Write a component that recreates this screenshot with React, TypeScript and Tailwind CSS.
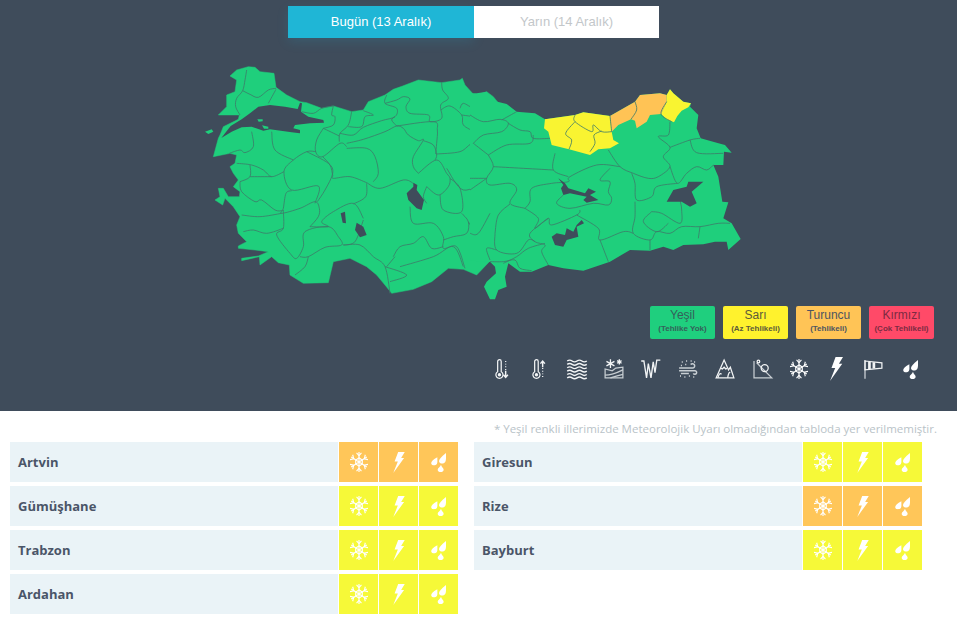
import React from 'react';

// coords below are in 3x crop space, the two groups are placed with a transform
const WEST_LAND =
  'M90,228 110,210 145,200 165,202 180,215 222,220 228,262 260,285 300,305 320,308 365,325 400,318 455,335 490,330 505,305 555,285 580,268 608,258 655,240 725,248 780,240 787,235 795,255 825,288 860,275 880,290 900,315 900,780 868,785 830,825 790,808 745,805 695,845 640,868 575,880 555,855 530,825 500,800 450,775 400,785 385,848 310,850 270,825 268,795 235,788 215,770 180,795 178,770 125,782 125,775 175,768 205,755 165,750 115,745 115,738 140,725 115,700 110,675 120,650 100,620 75,595 68,615 45,600 60,590 55,565 70,565 85,590 118,590 120,575 100,560 115,540 100,520 90,500 105,490 110,465 90,460 40,470 55,415 60,405 70,380 115,358 118,345 55,345 80,320 80,285 105,275 110,240 Z';
const MARMARA =
  'M64,414 92,378 125,358 150,340 175,320 210,315 255,320 293,327 300,308 306,310 303,335 325,350 370,360 372,368 330,370 285,375 280,385 300,390 300,400 275,397 210,388 190,392 155,380 125,382 95,395 Z';
const WEST_ISLANDS = [
  'M15,395 35,388 40,395 25,402 Z',
  'M172,358 188,358 188,364 176,365 Z',
  'M186,376 205,380 205,386 192,386 Z',
];
const WEST_LAKES = [
  'M640,548 652,555 650,570 672,600 665,630 650,625 625,600 620,580 640,560 Z',
  'M470,668 490,680 500,705 480,712 465,690 Z',
  'M422,640 435,635 438,670 428,668 Z',
];
const WEST_BORDERS = [
  'M140,210 135,240 128,272 110,295 107,320 120,345',
  'M128,272 150,283 175,292 205,270 228,265',
  'M228,268 205,310',
  'M305,335 340,340 365,325 400,318',
  'M400,318 395,345 405,350 400,375 370,385',
  'M455,335 445,375 420,400 418,425',
  'M370,385 350,420 347,455 368,470 420,430 440,440',
  'M370,385 418,408',
  'M445,380 485,380 495,350 520,345 490,332',
  'M420,400 460,405 490,382 545,362 585,350 590,325 555,310 560,285',
  'M555,310 590,300 610,290 630,297 618,320 630,340 685,345 690,365 725,355 722,315 745,295 728,270 725,248',
  'M590,378 575,360 585,350',
  'M440,445 500,445 525,470 535,520 520,545',
  'M440,430 490,418 555,395 590,378 610,385 625,405 655,422 670,420 640,470 640,500 655,520',
  'M590,378 700,365 712,390 710,430 707,462',
  'M670,422 700,435 710,465 705,480',
  'M368,470 390,495 398,525 400,535 450,530 500,548',
  'M348,455 320,455 280,480 252,515 275,570 355,558 345,610',
  'M320,455 385,490 398,520 375,570 352,605',
  'M252,515 215,530 190,510 155,495 110,490',
  'M120,545 150,530 150,495',
  'M150,530 215,530',
  'M280,480 225,450 215,395',
  'M88,460 120,450 135,458 160,440 155,395',
  'M120,545 125,575 165,605 185,600 225,630 247,632',
  'M275,572 258,580 250,625 245,640 300,625 345,605 358,625 355,650 330,680',
  'M250,630 250,685 230,705 270,760 290,775 310,740 315,695 385,680 415,710 425,735 375,742 325,770 300,770',
  'M245,640 180,650 125,645',
  'M250,685 200,700 160,690 130,695',
  'M330,680 385,680 365,665 400,635 460,610 490,655',
  'M500,550 497,590 460,612',
  'M490,660 465,725 430,735 480,735 520,770 555,800 570,880',
  'M325,770 315,800 285,825',
  'M555,800 620,825 570,845',
  'M600,800 700,770 760,740 790,800',
  'M580,770 600,740 640,730 670,710 695,745 730,740',
  'M560,800 585,770',
  'M630,620 640,670 700,670 730,710 730,745 770,740 795,805',
  'M500,548 540,565 610,540 640,550',
  'M680,560 670,590 680,610',
  'M655,520 710,480 740,520 750,535 745,560 715,585 680,560',
  'M750,535 780,565 785,635 730,630 720,585',
  'M785,640 805,665 800,700 760,710 730,720',
  'M740,505 790,570 860,535 880,490 870,462 900,462',
  'M710,462 780,455 820,430 870,450',
  'M820,430 825,400 790,375 785,345 750,318 722,330',
  'M780,325 790,310 820,322 825,290',
  'M785,345 850,355 895,370',
  'M820,430 850,410 900,400',
  'M860,535 865,555 900,555',
  'M805,665 830,700 860,680 885,635 900,635',
  'M860,700 870,770 885,785',
  'M890,710 890,740 900,745',
];

const EAST_LAND =
  'M0,100 20,100 50,95 70,122 110,132 140,155 195,160 225,178 315,165 340,157 420,168 495,125 510,105 570,100 590,105 600,88 610,100 640,125 663,130 660,140 685,165 680,205 692,235 740,248 765,255 785,278 762,275 760,315 730,315 745,350 757,425 775,427 760,475 785,490 812,537 775,570 770,545 735,545 700,553 640,555 610,570 580,560 540,572 480,570 420,605 340,632 280,625 235,615 185,635 150,635 115,610 105,650 110,680 85,690 75,718 60,718 42,680 50,665 78,640 75,620 60,605 30,605 0,600 Z';
const EAST_YELLOW = [
  'M225,178 315,165 340,157 420,168 425,215 430,240 447,250 420,265 385,268 360,285 297,268 245,255 235,215 222,205 Z',
  'M590,105 600,88 610,100 640,125 663,130 655,142 635,152 622,168 612,187 590,178 573,162 590,125 Z',
];
const EAST_ORANGE = 'M420,168 495,125 510,105 570,100 590,105 590,125 573,162 540,165 530,185 500,205 495,182 483,178 445,195 425,215 Z';
const EAST_LAKES = [
  'M265,355 285,370 295,385 345,400 355,385 378,395 360,405 385,420 350,428 340,420 350,410 300,400 280,405 273,385 280,375 Z',
  'M335,480 342,490 320,500 325,530 290,540 280,560 255,555 245,530 260,520 285,525 290,505 310,515 320,495 Z',
  'M590,425 610,390 650,380 655,365 700,365 665,395 680,430 660,440 635,425 Z',
];
const EAST_BORDERS = [
  'M315,165 315,185 365,215 370,195 395,215 425,215',
  'M315,185 287,220 305,240 297,268',
  'M395,213 372,225 375,250 360,275',
  'M420,168 425,215',
  'M495,125 500,150 483,178',
  'M590,125 573,162 605,185',
  'M600,185 595,225 565,230 600,262 580,290 600,320 565,350 535,355 490,340 450,320 415,270',
  'M600,262 660,240 690,235',
  'M660,240 680,278 760,280',
  'M600,320 622,370 650,340 680,320 710,330 730,315',
  'M622,370 560,380 545,410 500,420 495,370 485,340',
  'M450,320 380,315 300,350 295,365 245,370 185,385 180,425 165,445',
  'M420,325 390,360 420,365 415,395 425,415 415,435 370,430 300,445 260,430 280,405',
  'M255,280 250,330 295,350',
  'M250,330 70,320',
  'M55,285 70,320 50,355 60,375 120,370 140,390 120,430 165,445',
  'M240,235 190,235 180,215 150,210 115,190',
  'M55,285 110,255 180,250 190,225',
  'M10,250 55,285',
  'M0,165 40,185 90,178 115,190 95,215 40,225 10,250',
  'M95,180 140,155',
  'M0,355 50,355',
  'M50,355 0,390',
  'M120,432 85,465 75,520',
  'M165,445 205,475 195,505 235,475 245,495 320,465 330,450',
  'M320,465 385,505 390,540 460,515 490,520',
  'M495,425 495,470 490,520 540,540 560,515 600,520 635,500 690,500 745,490 780,490',
  'M545,455 520,485 560,515 595,490',
  'M545,455 575,460 630,490 635,450 630,420',
  'M390,540 415,605',
  'M235,475 180,520 195,545 225,555 215,575 235,615',
  'M225,550 175,565 140,590 100,610',
  'M80,570 50,565 60,600',
  'M75,520 80,570 140,580 175,540 195,545',
  'M0,520 25,520 60,460',
  'M60,605 100,605 135,600 150,625 185,632',
  'M690,500 685,535',
  'M540,540 540,570',
];

// round off the traced border polylines
function smooth(d: string): string {
  const pts = d
    .replace('M', '')
    .split(' ')
    .map((p) => p.split(',').map(Number));
  let out = `M${pts[0][0]},${pts[0][1]}`;
  for (let i = 0; i < pts.length - 1; i++) {
    const p0 = pts[Math.max(i - 1, 0)];
    const p1 = pts[i];
    const p2 = pts[i + 1];
    const p3 = pts[Math.min(i + 2, pts.length - 1)];
    const c1x = p1[0] + (p2[0] - p0[0]) / 6;
    const c1y = p1[1] + (p2[1] - p0[1]) / 6;
    const c2x = p2[0] - (p3[0] - p1[0]) / 6;
    const c2y = p2[1] - (p3[1] - p1[1]) / 6;
    out += ` C${c1x},${c1y} ${c2x},${c2y} ${p2[0]},${p2[1]}`;
  }
  return out;
}

function TurkeyMap() {
  const land = '#1fcf7c';
  const dark = '#3f4c5b';
  return (
    <svg className="block w-[957px] h-[268px]" viewBox="0 38 957 268">
      <g transform="translate(200 0) scale(0.33333)">
        <path d={WEST_LAND} fill={land} stroke={land} strokeWidth="1.500" strokeLinejoin="round" />
        <path d={MARMARA} fill={dark} />
        {WEST_ISLANDS.map((d) => (
          <path key={d} d={d} fill={land} />
        ))}
        {WEST_BORDERS.map((d) => (
          <path key={d} d={smooth(d)} fill="none" stroke="#3d7a6a" strokeWidth="2.400" />
        ))}
        {WEST_LAKES.map((d) => (
          <path key={d} d={d} fill={dark} />
        ))}
      </g>
      <g transform="translate(470 60) scale(0.33333)">
        <path d={EAST_LAND} fill={land} />
        {EAST_YELLOW.map((d) => (
          <path key={d} d={d} fill="#f9f431" />
        ))}
        <path d={EAST_ORANGE} fill="#ffc355" />
        {EAST_BORDERS.map((d) => (
          <path key={d} d={smooth(d)} fill="none" stroke="#3d7a6a" strokeWidth="2.400" />
        ))}
        {EAST_LAKES.map((d) => (
          <path key={d} d={d} fill={dark} />
        ))}
      </g>
    </svg>
  );
}

type IconProps = { className?: string };

function Snow({ className }: IconProps) {
  return (
    <svg className={className} viewBox="1 1 22 22" preserveAspectRatio="none" fill="none" stroke="white" strokeWidth="1.400">
      <path d="M12 1v22M2.500 6.500l19 11M21.500 6.500l-19 11" />
      <path d="M9 2l3 3 3-3M9 22l3-3 3 3M1 9.500l4.500-1-1.200-4.500M23 14.500l-4.500 1 1.200 4.500M23 9.500l-4.500-1 1.200-4.500M1 14.500l4.500 1-1.200 4.500" />
      <path d="M12 7.500l4 2.300v4.400l-4 2.300-4-2.300V9.800z" />
    </svg>
  );
}

function Bolt({ className }: IconProps) {
  return (
    <svg className={className} viewBox="0 0 35 64" fill="white">
      <path d="M15 0H35L24 18H33L0 64 14 29H4z" />
    </svg>
  );
}

function Drops({ className }: IconProps) {
  return (
    <svg className={className} viewBox="0 0 45 57" fill="white">
      <path d="M45 0C46 12 45 24 42 28 38 33 28 33 25 28 22 22 26 16 45 0z" />
      <path d="M19 13C19 20 20 28 18 32 14 38 3 38 1 32-1 27 6 20 19 13z" />
      <path d="M30 35C31 41 38 45 38 50 38 55 33 57 29 57 24 57 20 55 20 50 20 45 28 41 30 35z" />
    </svg>
  );
}

function ThermoBase() {
  return (
    <>
      <path d="M6 3.500a2 2 0 0 1 4 0V15a4 4 0 1 1-4 0z" />
      <circle cx="8" cy="18.500" r="1.200" fill="white" />
    </>
  );
}

function RowIcon({ children }: { children: React.ReactNode }) {
  return (
    <svg className="w-[24px] h-[24px] shrink-0" viewBox="-1.500 -1.500 27 27" fill="none" stroke="#f2f4f5" strokeWidth="1.400">
      {children}
    </svg>
  );
}

const HAZARD_ICONS = [
  <RowIcon key="cold">
    <ThermoBase />
    <path d="M15 3v1M15 6v1M15 9v1M15 12v1" />
    <path d="M15 14v7M12.500 18.500l2.500 3 2.500-3" strokeWidth="1.600" />
  </RowIcon>,
  <RowIcon key="hot">
    <ThermoBase />
    <path d="M15 11v10" strokeDasharray="1 2" />
    <path d="M15 10V3M12.500 6l2.500-3 2.500 3" strokeWidth="1.600" />
  </RowIcon>,
  <RowIcon key="fog">
    <path d="M1 3q2.750-2 5.500 0t5.500 0 5.500 0 5.500 0M1 6.800q2.750-2 5.500 0t5.500 0 5.500 0 5.500 0M1 10.600q2.750-2 5.500 0t5.500 0 5.500 0 5.500 0M1 14.400q2.750-2 5.500 0t5.500 0 5.500 0 5.500 0M1 18.200q2.750-2 5.500 0t5.500 0 5.500 0 5.500 0M1 22q2.750-2 5.500 0t5.500 0 5.500 0 5.500 0" strokeWidth="1.600" />
  </RowIcon>,
  <RowIcon key="snowfall">
    <path d="M2 12v10h20V10l-8 1-4 3z" stroke="#c8ced3" />
    <path d="M2 19q8 0 20-6M8 22q6-2 14-4" stroke="#c8ced3" />
    <path d="M8 1v10M3.500 3.500l9 5M12.500 3.500l-9 5M18 1v6M15.500 2.500l5 3M20.500 2.500l-5 3" strokeWidth="1.500" />
  </RowIcon>,
  <RowIcon key="ice">
    <path d="M1 3h3l3 19 2-16 3 16 2.500-18 2 12 2-14h4" strokeWidth="1.500" />
  </RowIcon>,
  <RowIcon key="dust">
    <path d="M2 11h15a2.500 2.500 0 1 0-2-4M2 14h18a2 2 0 1 1-2 3M4 17h9" strokeWidth="1.700" stroke="#c8ced3" />
    <path d="M5 4h1M10 3h1M15 3h1M19 4h1M4 8h1M9 7h1M3 20h1M8 21h1M13 20h1M18 21h1" strokeWidth="1.700" />
  </RowIcon>,
  <RowIcon key="avalanche">
    <path d="M2 22L11 2l5 11 2-3 4 12z" />
    <path d="M7 11l2 1 2-2 2 2 1-1M4 22q2-7 4-4M15 22q1-7 3-6" />
  </RowIcon>,
  <RowIcon key="rockfall">
    <path d="M3 3v19h20L6 5" stroke="#c8ced3" />
    <circle cx="15" cy="11" r="4" />
    <circle cx="8" cy="3.500" r="1.500" />
  </RowIcon>,
  <div key="snow" className="w-[24px] h-[24px] shrink-0 flex items-center justify-center">
    <Snow className="w-[18px] h-[20px]" />
  </div>,
  <div key="bolt" className="w-[24px] h-[24px] shrink-0 flex items-center justify-center">
    <Bolt className="w-[13px] h-[24px]" />
  </div>,
  <RowIcon key="wind">
    <path d="M3 23V2" strokeWidth="1.500" stroke="#c8ced3" />
    <path d="M3 3l19 2v6L3 13z" />
    <path d="M8 4v8M13 4.500v7" strokeWidth="3" />
  </RowIcon>,
  <div key="drops" className="w-[24px] h-[24px] shrink-0 flex items-center justify-center">
    <Drops className="w-[15px] h-[19px]" />
  </div>,
];

const LEGEND = [
  { title: 'Yeşil', note: '(Tehlike Yok)', box: 'bg-[#1fcf7e] text-[#35605a]' },
  { title: 'Sarı', note: '(Az Tehlikeli)', box: 'bg-[#fff22d] text-[#5c5a3a]' },
  { title: 'Turuncu', note: '(Tehlikeli)', box: 'bg-[#ffc456] text-[#4d5560]' },
  { title: 'Kırmızı', note: '(Çok Tehlikeli)', box: 'bg-[#ff4a68] text-[#7c2a42]' },
];

type Level = 'yellow' | 'orange';

const LEFT_ROWS: { name: string; level: Level }[] = [
  { name: 'Artvin', level: 'orange' },
  { name: 'Gümüşhane', level: 'yellow' },
  { name: 'Trabzon', level: 'yellow' },
  { name: 'Ardahan', level: 'yellow' },
];

const RIGHT_ROWS: { name: string; level: Level }[] = [
  { name: 'Giresun', level: 'yellow' },
  { name: 'Rize', level: 'orange' },
  { name: 'Bayburt', level: 'yellow' },
];

function WarnRow({ name, level }: { name: string; level: Level }) {
  const cell = `flex items-center justify-center w-[39px] ${level === 'orange' ? 'bg-[#ffc659]' : 'bg-[#f6f938]'}`;
  return (
    <div className="flex h-[40px] gap-px">
      <div className="flex-1 flex items-center pl-[8px] pt-[2px] bg-[#eaf3f7] text-[13px] font-bold text-[#4a5568]">
        {name}
      </div>
      <div className={cell}>
        <Snow className="w-[18px] h-[20px]" />
      </div>
      <div className={cell}>
        <Bolt className="w-[12px] h-[21px]" />
      </div>
      <div className={cell}>
        <Drops className="w-[15px] h-[19px]" />
      </div>
    </div>
  );
}

export default function App() {
  return (
    <div className="w-[957px] h-[620px] bg-white font-['Open_Sans',sans-serif] overflow-hidden">
      <div className="h-[411px] bg-[#3f4c5b] pt-[6px]">
        <div className="flex justify-center pr-[10px] font-['Liberation_Sans',sans-serif] text-[13px]">
          <div className="w-[186px] h-[32px] flex items-center justify-center bg-[#1fb6d6] text-white shadow-[0_4px_12px_rgba(31,182,214,0.15)]">
            Bugün (13 Aralık)
          </div>
          <div className="w-[185px] h-[32px] flex items-center justify-center bg-white text-[#c3c7ca]">
            Yarın (14 Aralık)
          </div>
        </div>
        <TurkeyMap />
        <div className="flex justify-end gap-[8px] pr-[23px] font-['Liberation_Sans',sans-serif]">
          {LEGEND.map((item) => (
            <div
              key={item.title}
              className={`w-[65px] h-[33px] rounded-[2px] flex flex-col items-center pt-[1px] ${item.box}`}
            >
              <span className="text-[12px] leading-[16px]">{item.title}</span>
              <span className="text-[8px] leading-[12px] font-bold whitespace-nowrap">{item.note}</span>
            </div>
          ))}
        </div>
        <div className="flex justify-end gap-[13px] pt-[18px] pr-[35px]">{HAZARD_ICONS}</div>
      </div>
      <p className="pt-[9px] pr-[20px] text-right text-[11.5px] leading-[17px] text-[#b9c3c8]">
        * Yeşil renkli illerimizde Meteorolojik Uyarı olmadığından tabloda yer verilmemiştir.
      </p>
      <div className="flex gap-[16px] pl-[10px] pt-[5px]">
        <div className="w-[448px] flex flex-col gap-[4px]">
          {LEFT_ROWS.map((row) => (
            <WarnRow key={row.name} name={row.name} level={row.level} />
          ))}
        </div>
        <div className="w-[448px] flex flex-col gap-[4px]">
          {RIGHT_ROWS.map((row) => (
            <WarnRow key={row.name} name={row.name} level={row.level} />
          ))}
        </div>
      </div>
    </div>
  );
}
